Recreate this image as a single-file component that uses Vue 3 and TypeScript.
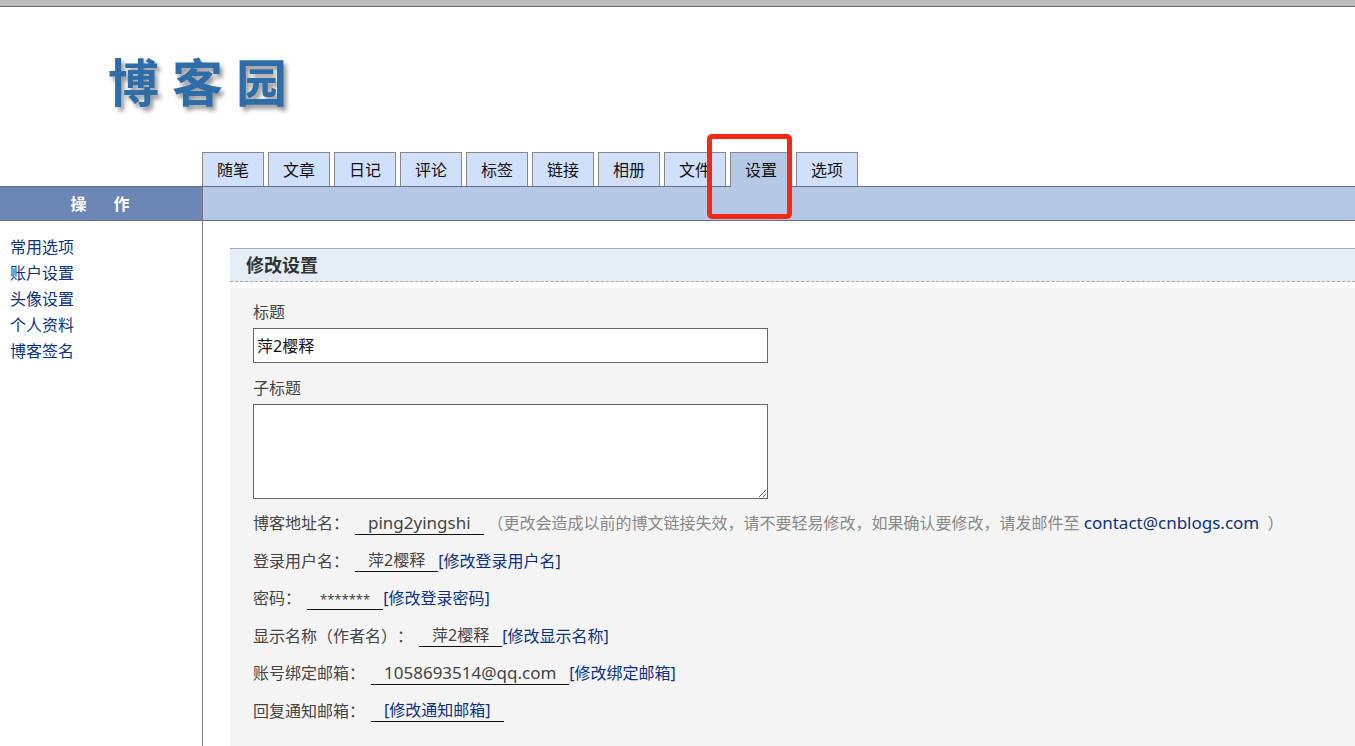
<script setup lang="ts">
import { ref } from 'vue'

interface Detail {
  label: string
  value?: string
  action?: string
  note?: boolean
  kind?: 'latin' | 'masked'
}

const tabs = ['随笔', '文章', '日记', '评论', '标签', '链接', '相册', '文件', '设置', '选项']
const activeTab = '设置'
const sideLinks = ['常用选项', '账户设置', '头像设置', '个人资料', '博客签名']

const title = ref('萍2樱释')
const subtitle = ref('')

const details: Detail[] = [
  { label: '博客地址名', value: 'ping2yingshi', kind: 'latin', note: true },
  { label: '登录用户名', value: '萍2樱释', action: '[修改登录用户名]' },
  { label: '密码', value: '*******', kind: 'masked', action: '[修改登录密码]' },
  { label: '显示名称（作者名）', value: '萍2樱释', action: '[修改显示名称]' },
  { label: '账号绑定邮箱', value: '1058693514@qq.com', kind: 'latin', action: '[修改绑定邮箱]' },
  { label: '回复通知邮箱', action: '[修改通知邮箱]' },
]
</script>

<template>
  <div class="page">
    <header class="header">
      <a class="logo" href="#"><span>博</span><span>客</span><span>园</span></a>
      <nav class="tabs">
        <a
          v-for="tab in tabs"
          :key="tab"
          href="#"
          class="tab"
          :class="{ active: tab === activeTab }"
        >{{ tab }}<span v-if="tab === activeTab" class="marker"></span></a>
      </nav>
    </header>

    <div class="band">
      <h2 class="side-title"><span>操</span><span>作</span></h2>
    </div>

    <div class="body">
      <aside class="side">
        <a v-for="link in sideLinks" :key="link" href="#">{{ link }}</a>
      </aside>

      <main class="main">
        <h1 class="heading">修改设置</h1>
        <form class="panel" @submit.prevent>
          <label for="title">标题</label>
          <input id="title" v-model="title" type="text" />
          <label for="subtitle">子标题</label>
          <textarea id="subtitle" v-model="subtitle"></textarea>
          <div class="details">
            <div v-for="item in details" :key="item.label" class="detail">
              <span class="name">{{ item.label }}：</span>
              <span v-if="item.value" class="value"><span :class="item.kind">{{ item.value }}</span></span>
              <a v-if="item.value && item.action" href="#">{{ item.action }}</a>
              <span v-if="!item.value" class="value"><a href="#">{{ item.action }}</a></span>
              <span v-if="item.note" class="note">（更改会造成以前的博文链接失效，请不要轻易修改，如果确认要修改，请发邮件至 <a href="#" class="latin">contact@cnblogs.com</a>&nbsp; ）</span>
            </div>
          </div>
        </form>
      </main>
    </div>
  </div>
</template>

<style>
body {
  margin: 0;
  background: #fff;
}
</style>

<style scoped>
.page {
  display: flex;
  flex-direction: column;
  box-sizing: border-box;
  min-height: 100vh;
  border-top: 6px solid #bbb;
  font-family: "Noto Sans", "Noto Sans CJK SC", sans-serif;
  font-size: 16px;
  line-height: 26px;
  color: #444;
  text-spacing-trim: space-all;
}

a {
  color: #0b3282;
  text-decoration: none;
}

.header {
  border-top: 1px solid #666;
}

.logo {
  display: flex;
  gap: 13px;
  width: max-content;
  height: 113px;
  margin: 32px 0 0 108px;
  font-family: "Noto Sans CJK SC", sans-serif;
  font-size: 51px;
  font-weight: 700;
  line-height: 82px;
  color: #2f6da8;
  text-shadow: 3px 4px 4px #999;
}

.tabs {
  display: flex;
  gap: 4px;
  margin-left: 202px;
}

.tab {
  position: relative;
  box-sizing: border-box;
  width: 62px;
  height: 34px;
  border: 1px solid #888;
  border-bottom: 0;
  background: #d1e0fa;
  color: #111;
  line-height: 34px;
  text-align: center;
}

.tab.active {
  height: 35px;
  margin-bottom: -1px;
  background: #b5c9e6;
}

.marker {
  position: absolute;
  top: -19px;
  left: -24px;
  box-sizing: border-box;
  width: 85px;
  height: 85px;
  border: 5px solid #f52817;
  border-radius: 5px;
}

.band {
  border-top: 1px solid #666c78;
  border-bottom: 1px solid #666c78;
  background: #b5c9e6;
}

.side-title {
  display: flex;
  justify-content: center;
  gap: 27px;
  box-sizing: border-box;
  width: 203px;
  height: 33px;
  margin: 0;
  padding-right: 2px;
  border-right: 1px solid #777;
  background: #6c86b6;
  color: #fff;
  font-size: 16px;
  line-height: 35px;
}

.body {
  display: flex;
  flex: 1;
}

.side {
  display: flex;
  flex-direction: column;
  flex: none;
  box-sizing: border-box;
  width: 203px;
  padding: 13px 10px;
  border-right: 1px solid #888;
}

.main {
  display: flex;
  flex: 1;
  flex-direction: column;
  min-width: 0;
  padding: 27px 0 0 27px;
}

.heading {
  margin: 0 0 6px;
  padding: 0 16px;
  border-top: 1px solid #a0a8b0;
  border-bottom: 1px dashed #aaa;
  background: #e4edf6;
  color: #333;
  font-size: 18px;
  line-height: 32px;
}

.panel {
  display: flex;
  flex: 1;
  flex-direction: column;
  align-items: flex-start;
  padding: 11px 0 20px 23px;
  background: #f4f4f4;
}

input,
textarea {
  box-sizing: border-box;
  width: 515px;
  max-width: 100%;
  border: 1px solid #666;
  border-radius: 0;
  background: #fff;
  color: #111;
  font: inherit;
}

input {
  height: 35px;
  margin: 3px 0 12px;
  padding: 0 3px 2px;
}

textarea {
  height: 95px;
  margin: 3px 0 5px;
  padding: 3px;
  resize: both;
}

.details {
  display: grid;
  grid-template-rows: repeat(3, 38px 37px);
}

.detail {
  display: flex;
  align-items: center;
  white-space: nowrap;
}

.name {
  margin-right: 6px;
}

.value {
  height: 22px;
  padding: 0 13px;
  border-bottom: 1px solid #111;
  line-height: 22px;
}

.latin {
  font-size: 17px;
}

.masked {
  font-size: 13px;
}

.note {
  margin-left: 4px;
  color: #888;
}
</style>
